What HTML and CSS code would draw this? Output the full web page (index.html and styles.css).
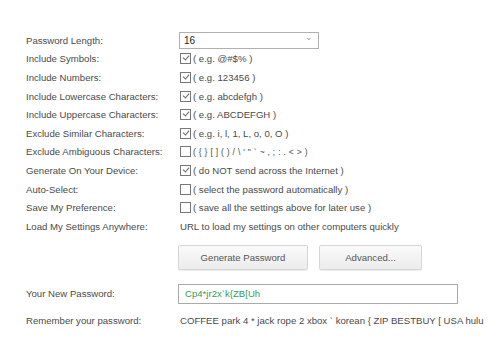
FILE: index.html
```html
<!DOCTYPE html>
<html lang="en">
<head>
    <meta charset="UTF-8">
    <title>Password Generator</title>
    <link rel="stylesheet" href="styles.css">
</head>
<body>
    <div class="options">
        <div class="row">
            <span class="label">Password Length:</span>
            <div class="select"><span>16</span><span class="arrow">&#8964;</span></div>
        </div>
        <div class="row"><span class="label">Include Symbols:</span><span class="value"><i class="box on"></i>( e.g. @#$% )</span></div>
        <div class="row"><span class="label">Include Numbers:</span><span class="value"><i class="box on"></i>( e.g. 123456 )</span></div>
        <div class="row"><span class="label">Include Lowercase Characters:</span><span class="value"><i class="box on"></i>( e.g. abcdefgh )</span></div>
        <div class="row"><span class="label">Include Uppercase Characters:</span><span class="value"><i class="box on"></i>( e.g. ABCDEFGH )</span></div>
        <div class="row"><span class="label">Exclude Similar Characters:</span><span class="value"><i class="box on"></i>( e.g. i, l, 1, L, o, 0, O )</span></div>
        <div class="row"><span class="label">Exclude Ambiguous Characters:</span><span class="value"><i class="box"></i><span class="small">( { } [ ] ( ) / \ ' " ` ~ , ; : . &lt; &gt; )</span></span></div>
        <div class="row"><span class="label">Generate On Your Device:</span><span class="value"><i class="box on"></i>( do NOT send across the Internet )</span></div>
        <div class="row"><span class="label">Auto-Select:</span><span class="value"><i class="box"></i>( select the password automatically )</span></div>
        <div class="row"><span class="label">Save My Preference:</span><span class="value"><i class="box"></i>( save all the settings above for later use )</span></div>
        <div class="row"><span class="label">Load My Settings Anywhere:</span><span class="value">URL to load my settings on other computers quickly</span></div>
    </div>

    <div class="buttons">
        <button class="btn generate">Generate Password</button>
        <button class="btn advanced">Advanced...</button>
    </div>

    <div class="row result">
        <span class="label">Your New Password:</span>
        <div class="output">Cp4*jr2x`k{ZB[Uh</div>
    </div>
    <div class="row remember">
        <span class="label">Remember your password:</span>
        <span class="value">COFFEE park 4 * jack rope 2 xbox ` korean { ZIP BESTBUY [ USA hulu</span>
    </div>
</body>
</html>
```

FILE: styles.css
```css
body {
    margin: 0;
    padding: 31px 0 0 26px;
    font-family: "Liberation Sans", Arial, sans-serif;
    font-size: 9.6px;
    color: #4a4a4a;
    background: #fff;
}

.row {
    display: grid;
    grid-template-columns: 154px 1fr;
    align-items: center;
    height: 18.6px;
}

.value {
    display: flex;
    align-items: center;
    white-space: nowrap;
}

.small {
    font-size: 8.5px;
    letter-spacing: 0.3px;
}

/* the length dropdown */
.select {
    width: 129px;
    height: 15px;
    border: 1px solid #b0b0b0;
    display: flex;
    align-items: center;
    justify-content: space-between;
    padding: 0 5px 0 4px;
    box-sizing: content-box;
    margin-left: -1px;
    color: #222;
    font-size: 10px;
}

.arrow {
    color: #999;
    font-size: 9px;
    margin-top: -6px;
}

/* checkboxes */
.box {
    display: inline-block;
    width: 9px;
    height: 9px;
    border: 1px solid #777;
    margin-right: 2px;
    position: relative;
}

.box.on::after {
    content: "";
    position: absolute;
    left: 2.5px;
    top: 0px;
    width: 3px;
    height: 5px;
    border-right: 1px solid #666;
    border-bottom: 1px solid #666;
    transform: rotate(40deg);
}

/* buttons */
.buttons {
    display: flex;
    gap: 11px;
    margin: 9px 0 0 152px;
}

.btn {
    height: 25px;
    font-family: "Liberation Sans", Arial, sans-serif;
    font-size: 9.6px;
    color: #555;
    background: linear-gradient(#fafafa, #ececec);
    border: 1px solid #d6d6d6;
    border-radius: 2px;
    box-shadow: 0 1px 1px rgba(0, 0, 0, 0.08);
}

.generate {
    width: 130px;
}

.advanced {
    width: 103px;
}

.result {
    margin-top: 14px;
    height: 20px;
}

.output {
    width: 272px;
    height: 18px;
    border: 1px solid #aaa;
    margin-left: -2px;
    padding-left: 6px;
    line-height: 18px;
    color: #3a9a5c;
}

.remember {
    margin-top: 8px;
}
```
